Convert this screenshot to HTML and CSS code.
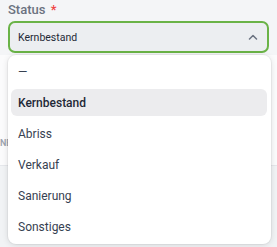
FILE: index.html
```html
<!DOCTYPE html>
<html lang="de">
<head>
<meta charset="utf-8">
<link rel="stylesheet" href="styles.css">
</head>
<body>
<div class="page">
  <div class="field">
    <div class="label">Status <span class="req">*</span></div>
    <div class="select">
      <span class="value">Kernbestand</span>
      <svg class="chev" width="10" height="6" viewBox="0 0 10 6"><path d="M1.5 5 L5 1.5 L8.5 5" fill="none" stroke="#6b7280" stroke-width="1.5" stroke-linecap="round" stroke-linejoin="round"/></svg>
    </div>
  </div>
  <div class="card">
    <div class="card-head">NE</div>
  </div>
  <ul class="menu">
    <li class="item">—</li>
    <li class="item active">Kernbestand</li>
    <li class="item">Abriss</li>
    <li class="item">Verkauf</li>
    <li class="item">Sanierung</li>
    <li class="item">Sonstiges</li>
  </ul>
</div>
</body>
</html>
```
FILE: styles.css
```css
* { box-sizing: border-box; }
html, body { margin: 0; padding: 0; }
body {
  background: #f1f3f5;
  font-family: Roboto, "Noto Sans", sans-serif;
  width: 277px;
  height: 247px;
  overflow: hidden;
}
.page { position: relative; height: 247px; }
.field {
  background: #f4f5f7;
  padding: 1px 8px 2px 8px;
}
.label {
  font-size: 13px;
  line-height: 17px;
  color: #6b7280;
  font-weight: 500;
}
.req { color: #ef4444; margin-left: 2px; }
.select {
  margin-top: 3px;
  height: 32px;
  border: 2px solid #6ab347;
  border-radius: 7px;
  background: #eceef1;
  display: flex;
  align-items: center;
  justify-content: space-between;
  padding: 0 9px 0 8px;
}
.value { font-size: 10.5px; color: #1f2937; }
.chev { display: block; }
.card {
  background: #fbfbfc;
  height: 111px;
  border-bottom: 1px solid #e5e7eb;
  display: flex;
  align-items: flex-end;
  padding-bottom: 17px;
}
.card-head {
  font-size: 9px;
  font-weight: 600;
  letter-spacing: 0;
  color: #9ca3af;
  line-height: 10px;
}
.menu {
  position: absolute;
  top: 55px;
  left: 8px;
  width: 263px;
  height: 189px;
  margin: 0;
  list-style: none;
  padding: 3px 4px 4px 3px;
  background: #ffffff;
  border-radius: 8px;
  box-shadow: 0 1px 6px rgba(0,0,0,0.12), 0 0 0 1px rgba(0,0,0,0.04);
  display: flex;
  flex-direction: column;
  gap: 4px;
}
.item {
  height: 27px;
  display: flex;
  align-items: center;
  padding-left: 7px;
  font-size: 12px;
  color: #374151;
  border-radius: 6px;
}
.item.active {
  background: #ececee;
  font-weight: 500;
  color: #1f2937;
}
```
